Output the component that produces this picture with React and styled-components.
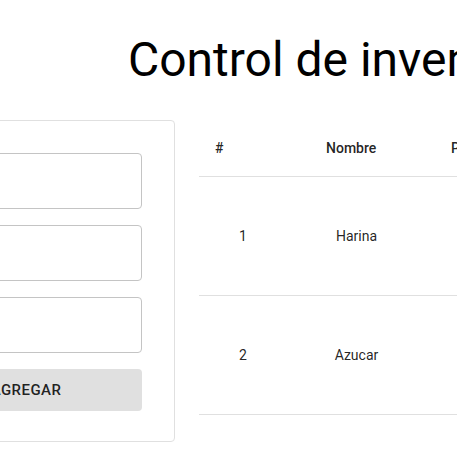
import React from 'react';
import styled, {createGlobalStyle} from "styled-components";

const GlobalStyle = createGlobalStyle`
  html, body { margin: 0; padding: 0; overflow: hidden; background: #fff; }
  body { font-family: Roboto, "Liberation Sans", sans-serif; color: rgba(0,0,0,0.87); }
`;

const Page = styled.div`
  width: 944px; margin-left: -123px;
`;

const Title = styled.h1`
  margin: 31px 0 32px; text-align: center;
  font-size: 48px; font-weight: 400; line-height: normal; color: #000;
`;

const Layout = styled.div`
  display: grid; grid-template-columns: 298px 1fr; column-gap: 24px; align-items: start;
`;

const Card = styled.form`
  border: 1px solid #e0e0e0; border-radius: 4px;
  padding: 32px 32px 30px;
  display: flex; flex-direction: column; gap: 16px;
`;

const Input = styled.input`
  box-sizing: border-box; height: 56px; width: 100%;
  border: 1px solid #c4c4c4; border-radius: 4px;
  font: inherit; font-size: 16px; padding: 0 14px; outline: none;
`;

const Button = styled.button`
  height: 42px; border: none; border-radius: 4px; background: #e0e0e0;
  font-family: Roboto, "Liberation Sans", sans-serif; font-size: 15px; font-weight: 500;
  letter-spacing: 0.43px; text-transform: uppercase; color: rgba(0,0,0,0.87);
  cursor: pointer;
`;

const Table = styled.div`
  font-size: 14px;
`;

const Row = styled.div`
  display: grid; grid-template-columns: ${p => p.$cols};
  height: ${p => p.$height}px; align-items: center;
  border-bottom: 1px solid #e0e0e0;
`;

const HeadCell = styled.div`
  padding-left: 16px; font-weight: 500; white-space: nowrap;
`;

const Cell = styled.div`
  text-align: center; white-space: nowrap;
`;

const ActionStack = styled.div`
  display: flex; flex-direction: column; align-items: center; gap: 12px;
`;

const SmallBtn = styled.button`
  height: 36px; padding: 0 16px; border: none; border-radius: 4px;
  background: ${p => p.$bg}; color: #fff; font-weight: 500; font-size: 14px;
  text-transform: uppercase;
`;

const productos = [
    {id: 1, nombre: 'Harina', precio: 20, cantidad: 10},
    {id: 2, nombre: 'Azucar', precio: 15, cantidad: 8},
];

const App = () => {
    return (
        <>
            <GlobalStyle/>
            <Page>
                <Title>Control de inventario</Title>
                <Layout>
                    <Card onSubmit={e => e.preventDefault()}>
                        <Input placeholder=""/>
                        <Input placeholder=""/>
                        <Input placeholder=""/>
                        <Button type="submit">Agregar</Button>
                    </Card>
                    <Table>
                        <Row $cols="111px 125px 125px 125px 1fr" $height={56}>
                            <HeadCell>#</HeadCell>
                            <HeadCell>Nombre</HeadCell>
                            <HeadCell>Precio</HeadCell>
                            <HeadCell>Cantidad</HeadCell>
                            <HeadCell>Acciones</HeadCell>
                        </Row>
                        {productos.map(p => (
                            <Row key={p.id} $cols="88px 139px 120px 120px 1fr" $height={118}>
                                <Cell>{p.id}</Cell>
                                <Cell>{p.nombre}</Cell>
                                <Cell>{p.precio}</Cell>
                                <Cell>{p.cantidad}</Cell>
                                <ActionStack>
                                    <SmallBtn $bg="#1976d2">Editar</SmallBtn>
                                    <SmallBtn $bg="#d32f2f">Eliminar</SmallBtn>
                                </ActionStack>
                            </Row>
                        ))}
                    </Table>
                </Layout>
            </Page>
        </>
    );
};

export default App;
